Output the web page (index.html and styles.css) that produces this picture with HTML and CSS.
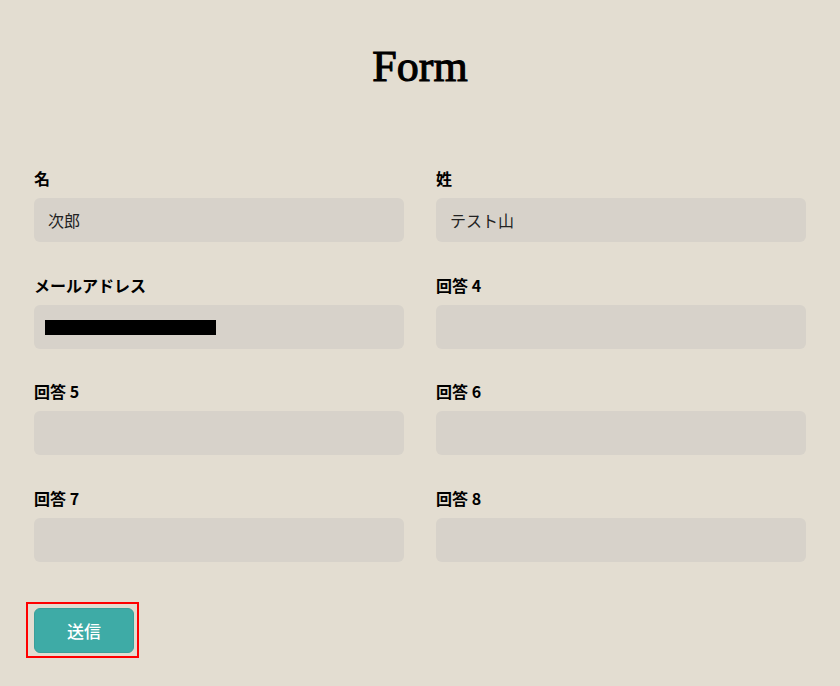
FILE: index.html
```html
<!DOCTYPE html>
<html lang="ja">
<head>
    <meta charset="UTF-8">
    <meta name="viewport" content="width=device-width, initial-scale=1.0">
    <title>Form</title>
    <link rel="stylesheet" href="styles.css">
</head>
<body>
    <main class="page">
        <h1 class="title">Form</h1>

        <form class="form">
            <div class="grid">
                <div class="field">
                    <label for="first-name">名</label>
                    <input type="text" id="first-name" value="次郎">
                </div>
                <div class="field">
                    <label for="last-name">姓</label>
                    <input type="text" id="last-name" value="テスト山">
                </div>
                <div class="field">
                    <label for="email">メールアドレス</label>
                    <div class="input-wrap">
                        <input type="email" id="email">
                        <!-- 非表示にしたアドレス -->
                        <span class="masked"></span>
                    </div>
                </div>
                <div class="field">
                    <label for="answer4">回答 4</label>
                    <input type="text" id="answer4">
                </div>
                <div class="field">
                    <label for="answer5">回答 5</label>
                    <input type="text" id="answer5">
                </div>
                <div class="field">
                    <label for="answer6">回答 6</label>
                    <input type="text" id="answer6">
                </div>
                <div class="field">
                    <label for="answer7">回答 7</label>
                    <input type="text" id="answer7">
                </div>
                <div class="field">
                    <label for="answer8">回答 8</label>
                    <input type="text" id="answer8">
                </div>
            </div>

            <div class="submit-box">
                <button type="submit" class="submit">送信</button>
            </div>
        </form>
    </main>
</body>
</html>
```

FILE: styles.css
```css
* {
    margin: 0;
    padding: 0;
    box-sizing: border-box;
}

body {
    background-color: #e3ddd1;
    color: #000;
    font-family: "Noto Sans CJK JP", "Noto Sans", sans-serif;
}

.page {
    padding: 42px 34px 0;
}

.title {
    font-family: "Liberation Serif", serif;
    font-size: 44px;
    font-weight: normal;
    line-height: 50px;
    text-align: center;
    -webkit-text-stroke: 1.1px #000;
}

.form {
    margin-top: 74px;
}

.grid {
    display: grid;
    grid-template-columns: 1fr 1fr;
    column-gap: 32px;
    row-gap: 30.5px;
}

.field {
    display: flex;
    flex-direction: column;
}

.field label {
    font-size: 16px;
    font-weight: bold;
    line-height: 24px;
    margin-bottom: 8px;
}

.input-wrap {
    position: relative;
}

.field input {
    width: 100%;
    height: 44px;
    padding: 0 14px;
    border: none;
    border-radius: 6px;
    background-color: #d7d2ca;
    font-family: "Noto Sans CJK JP", "Noto Sans", sans-serif;
    font-size: 16px;
    color: #222;
    outline: none;
}

.masked {
    position: absolute;
    left: 11px;
    top: 15px;
    width: 171px;
    height: 15px;
    background-color: #000;
}

.submit-box {
    display: inline-block;
    margin: 40px 0 0 -8px;
    padding: 4px 3px 3px 6px;
    border: 2px solid #f00;
}

.submit {
    display: block;
    width: 100px;
    height: 45px;
    border: 1px solid #3a9f9a;
    border-radius: 6px;
    background-color: #3eaba6;
    color: #fff;
    font-family: "Noto Sans CJK JP", "Noto Sans", sans-serif;
    font-size: 17px;
    font-weight: 500;
    cursor: pointer;
}
```
